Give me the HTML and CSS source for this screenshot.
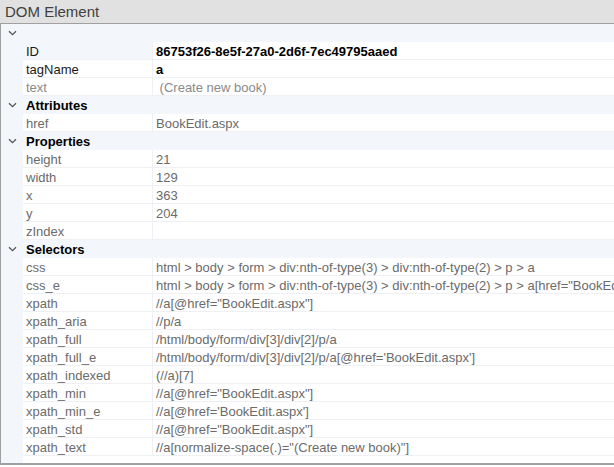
FILE: index.html
```html
<!DOCTYPE html>
<html>
<head>
<meta charset="utf-8">
<link rel="stylesheet" href="styles.css">
</head>
<body>
<div class="title">DOM Element</div>
<div class="panel">
  <div class="row group"><span class="chev"><svg width="9" height="6" viewBox="0 0 9 6"><path d="M1 1.2 L4.5 4.6 L8 1.2" fill="none" stroke="#555" stroke-width="1.3"/></svg></span><span class="gname"></span></div>
  <div class="row sel"><span class="ind"></span><span class="name dark">ID</span><span class="val bold">86753f26-8e5f-27a0-2d6f-7ec49795aaed</span></div>
  <div class="row"><span class="ind"></span><span class="name dark">tagName</span><span class="val bold">a</span></div>
  <div class="row"><span class="ind"></span><span class="name light">text</span><span class="val light">&nbsp;(Create new book)</span></div>

  <div class="row group"><span class="chev"><svg width="9" height="6" viewBox="0 0 9 6"><path d="M1 1.2 L4.5 4.6 L8 1.2" fill="none" stroke="#555" stroke-width="1.3"/></svg></span><span class="gname">Attributes</span></div>
  <div class="row"><span class="ind"></span><span class="name">href</span><span class="val">BookEdit.aspx</span></div>

  <div class="row group"><span class="chev"><svg width="9" height="6" viewBox="0 0 9 6"><path d="M1 1.2 L4.5 4.6 L8 1.2" fill="none" stroke="#555" stroke-width="1.3"/></svg></span><span class="gname">Properties</span></div>
  <div class="row"><span class="ind"></span><span class="name">height</span><span class="val">21</span></div>
  <div class="row"><span class="ind"></span><span class="name">width</span><span class="val">129</span></div>
  <div class="row"><span class="ind"></span><span class="name">x</span><span class="val">363</span></div>
  <div class="row"><span class="ind"></span><span class="name">y</span><span class="val">204</span></div>
  <div class="row"><span class="ind"></span><span class="name">zIndex</span><span class="val"></span></div>

  <div class="row group"><span class="chev"><svg width="9" height="6" viewBox="0 0 9 6"><path d="M1 1.2 L4.5 4.6 L8 1.2" fill="none" stroke="#555" stroke-width="1.3"/></svg></span><span class="gname">Selectors</span></div>
  <div class="row"><span class="ind"></span><span class="name">css</span><span class="val">html &gt; body &gt; form &gt; div:nth-of-type(3) &gt; div:nth-of-type(2) &gt; p &gt; a</span></div>
  <div class="row"><span class="ind"></span><span class="name">css_e</span><span class="val">html &gt; body &gt; form &gt; div:nth-of-type(3) &gt; div:nth-of-type(2) &gt; p &gt; a[href="BookEdit.aspx"]</span></div>
  <div class="row"><span class="ind"></span><span class="name">xpath</span><span class="val">//a[@href="BookEdit.aspx"]</span></div>
  <div class="row"><span class="ind"></span><span class="name">xpath_aria</span><span class="val">//p/a</span></div>
  <div class="row"><span class="ind"></span><span class="name">xpath_full</span><span class="val">/html/body/form/div[3]/div[2]/p/a</span></div>
  <div class="row"><span class="ind"></span><span class="name">xpath_full_e</span><span class="val">/html/body/form/div[3]/div[2]/p/a[@href='BookEdit.aspx']</span></div>
  <div class="row"><span class="ind"></span><span class="name">xpath_indexed</span><span class="val">(//a)[7]</span></div>
  <div class="row"><span class="ind"></span><span class="name">xpath_min</span><span class="val">//a[@href="BookEdit.aspx"]</span></div>
  <div class="row"><span class="ind"></span><span class="name">xpath_min_e</span><span class="val">//a[@href='BookEdit.aspx']</span></div>
  <div class="row"><span class="ind"></span><span class="name">xpath_std</span><span class="val">//a[@href="BookEdit.aspx"]</span></div>
  <div class="row"><span class="ind"></span><span class="name">xpath_text</span><span class="val">//a[normalize-space(.)="(Create new book)"]</span></div>
  <div class="filler"><span class="ind"></span><span class="blank"></span></div>
</div>
</body>
</html>
```
FILE: styles.css
```css
html, body {
  margin: 0;
  padding: 0;
  background: #ffffff;
  font-family: "Liberation Sans", Arial, sans-serif;
  font-size: 13px;
  overflow: hidden;
}
.title {
  height: 23px;
  line-height: 23px;
  background: #e1e1e1;
  color: #404040;
  font-size: 15px;
  padding-left: 5px;
  border-bottom: 1px solid #a0a0a0;
}
.panel {
  display: flex;
  flex-direction: column;
  border-left: 1px solid #a0a0a0;
  border-bottom: 2px solid #a0a0a0;
  height: 439px;
  background: #ffffff;
}
.row {
  display: grid;
  grid-template-columns: 22px 130px 1fr;
  height: 18px;
  flex: none;
}
.row > span {
  line-height: 17px;
  height: 16px;
  padding-top: 1px;
  border-bottom: 1px solid #eef0f3;
  white-space: nowrap;
  overflow: hidden;
}
.ind {
  background: #f3f6fb;
  border-bottom-color: #f3f6fb !important;
}
.name {
  padding-left: 3px;
  color: #6b6b6b;
  border-right: 1px solid #eef0f3;
}
.val {
  padding-left: 3px;
  color: #6b6b6b;
}
.dark { color: #1a1a1a; }
.light { color: #8a8a8a; }
.bold { font-weight: bold; color: #000; }
.sel .name { background: #f3f6fb; }
.group {
  background: #f3f6fb;
  grid-template-columns: 22px 1fr;
}
.group > span { border-bottom-color: #f3f6fb; }
.chev {
  display: flex;
  align-items: center;
  justify-content: center;
}
.chev svg { display: block; }
.gname {
  padding-left: 3px;
  font-weight: bold;
  color: #000;
}
.filler {
  flex: 1;
  display: grid;
  grid-template-columns: 22px 1fr;
}
```
